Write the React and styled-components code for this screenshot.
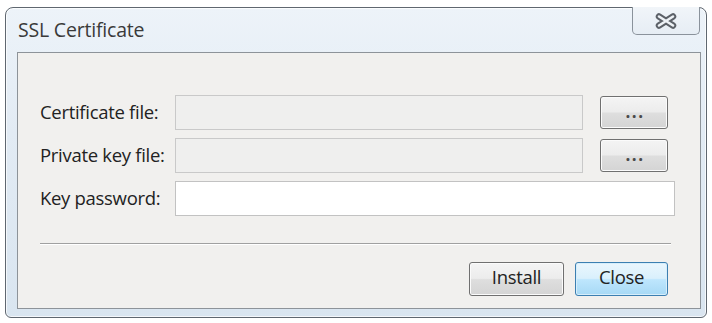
import React from 'react';
import styled, { createGlobalStyle } from 'styled-components';

const GlobalStyle = createGlobalStyle`
  html, body {
    margin: 0;
    padding: 0;
    background: #ffffff;
  }
  body {
    font-family: 'Open Sans', 'Noto Sans', 'Liberation Sans', sans-serif;
  }
`;

const Page = styled.div`
  width: 712px;
  height: 323px;
  padding: 7px 5px 5px 5px;
  box-sizing: border-box;
`;

const Window = styled.div`
  height: 311px;
  display: flex;
  flex-direction: column;
  border: 1px solid #5f6770;
  border-radius: 8px 8px 6px 6px;
  background: linear-gradient(180deg, #edf3f9 0%, #e2ebf4 40%, #d9e5f0 100%);
  box-shadow: inset 0 0 0 1px rgba(255, 255, 255, 0.7);
  box-sizing: border-box;
`;

const TitleBar = styled.div`
  height: 44px;
  display: flex;
  align-items: flex-start;
  justify-content: space-between;
  padding-left: 12px;
  padding-right: 6px;
`;

const Title = styled.div`
  margin-top: 12px;
  font-size: 19.5px;
  line-height: 1;
  color: #3a3a3a;
  letter-spacing: -0.2px;
`;

const CloseGlyphBox = styled.div`
  width: 68px;
  height: 28px;
  border: 1px solid #8a929b;
  border-top: none;
  border-radius: 0 0 5px 5px;
  background: linear-gradient(180deg, #f1f5f9 0%, #e6edf4 100%);
  display: flex;
  align-items: center;
  justify-content: center;
  box-sizing: border-box;
  margin-top: -1px;
  padding-top: 1px;
`;

const Client = styled.div`
  flex: 1;
  margin: 0 5px 8px 11px;
  background: #f1f0ee;
  border: 1px solid #8d9399;
  padding: 42px 24px 0 22px;
  display: flex;
  flex-direction: column;
`;

const Form = styled.div`
  display: grid;
  grid-template-columns: 135px 408px 17px 75px;
  row-gap: 8px;
  align-items: center;
`;

const Label = styled.label`
  font-size: 18.5px;
  line-height: 1;
  color: #222222;
  letter-spacing: -0.3px;
  white-space: nowrap;
`;

const Field = styled.input`
  height: 35px;
  box-sizing: border-box;
  border: 1px solid ${(p) => (p.disabled ? '#c9c9c9' : '#c2c2c2')};
  background: ${(p) => (p.disabled ? '#efefee' : '#ffffff')};
  grid-column: ${(p) => (p.wide ? '2 / span 3' : '2')};
  outline: none;
  padding: 0 6px;
`;

const Browse = styled.button`
  grid-column: 4;
  width: 68px;
  height: 33px;
  border: 1px solid #707070;
  border-radius: 3px;
  background: linear-gradient(180deg, #f4f4f4 0%, #ececec 48%, #dedede 52%, #d4d4d4 100%);
  box-shadow: inset 0 0 0 1px #fbfbfb;
  font-family: inherit;
  font-size: 17px;
  font-weight: 700;
  line-height: 1;
  color: #4a4a4a;
  letter-spacing: 1.5px;
  padding: 0 0 3px 2px;
  display: flex;
  align-items: center;
  justify-content: center;
`;

const Separator = styled.div`
  margin-top: 27px;
  margin-right: 5px;
  height: 0;
  border-top: 1px solid #a0a0a0;
  border-bottom: 1px solid #ffffff;
`;

const Footer = styled.div`
  display: flex;
  justify-content: flex-end;
  gap: 11px;
  margin-top: 17px;
  margin-right: 8px;
`;

const DialogButton = styled.button`
  width: ${(p) => p.w}px;
  height: 34px;
  border-radius: 3px;
  font-family: inherit;
  font-size: 18.5px;
  line-height: 1;
  letter-spacing: -0.3px;
  color: #222222;
  padding: 0 0 3px 0;
  border: 1px solid ${(p) => (p.primary ? '#3c7fb1' : '#707070')};
  background: ${(p) =>
    p.primary
      ? 'linear-gradient(180deg, #eaf6fd 0%, #d9f0fc 48%, #bee6fd 52%, #a7d9f5 100%)'
      : 'linear-gradient(180deg, #f4f4f4 0%, #ececec 48%, #dedede 52%, #d4d4d4 100%)'};
  box-shadow: inset 0 0 0 1px ${(p) => (p.primary ? '#d6eefb' : '#fbfbfb')};
`;

function CloseX() {
  return (
    <svg width="24" height="16" viewBox="0 0 24 16">
      <path
        d="M5 3.5 L19 12.5 M19 3.5 L5 12.5"
        stroke="#5c6168"
        strokeWidth="6.5"
        strokeLinecap="round"
        fill="none"
      />
      <path
        d="M5 3.5 L19 12.5 M19 3.5 L5 12.5"
        stroke="#eef2f6"
        strokeWidth="2.6"
        strokeLinecap="round"
        fill="none"
      />
    </svg>
  );
}

export default function App() {
  return (
    <>
      <GlobalStyle />
      <Page>
        <Window>
          <TitleBar>
            <Title>SSL Certificate</Title>
            <CloseGlyphBox>
              <CloseX />
            </CloseGlyphBox>
          </TitleBar>
          <Client>
            <Form>
              <Label>Certificate file:</Label>
              <Field disabled />
              <Browse>...</Browse>

              <Label>Private key file:</Label>
              <Field disabled />
              <Browse>...</Browse>

              <Label>Key password:</Label>
              <Field type="password" wide />
            </Form>
            <Separator />
            <Footer>
              <DialogButton w={95}>Install</DialogButton>
              <DialogButton w={93} primary>
                Close
              </DialogButton>
            </Footer>
          </Client>
        </Window>
      </Page>
    </>
  );
}
